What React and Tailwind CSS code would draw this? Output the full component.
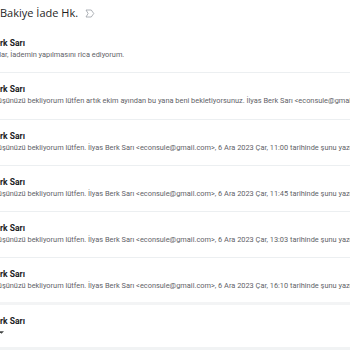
import { useState } from "react";

const SNIPPET_TAIL = "görüşünüzü bekliyorum lütfen. İlyas Berk Sarı <econsule@gmail.com>, 6 Ara 2023 Çar,";

const MESSAGES = [
  { id: 1, snippet: "Merhabalar, İademin yapılmasını rica ediyorum." },
  {
    id: 2,
    snippet:
      "Hâlâ görüşünüzü bekliyorum lütfen artık ekim ayından bu yana beni bekletiyorsunuz. İlyas Berk Sarı <econsule@gmail.com>, 6 Ara 2023 Çar,",
  },
  { id: 3, snippet: `Hâlâ ${SNIPPET_TAIL} 11:00 tarihinde şunu yazdı:` },
  { id: 4, snippet: `Hâlâ ${SNIPPET_TAIL} 11:45 tarihinde şunu yazdı:` },
  { id: 5, snippet: `Hâlâ ${SNIPPET_TAIL} 13:03 tarihinde şunu yazdı:` },
  { id: 6, snippet: `Hâlâ ${SNIPPET_TAIL} 16:10 tarihinde şunu yazdı:` },
];

function ImportantIcon() {
  return (
    <svg width="10" height="9" viewBox="0 0 20 18" fill="none">
      <path
        d="M2 2h10.5l5 7-5 7H2l4.2-7L2 2z"
        stroke="#9aa0a6"
        strokeWidth="1.6"
        strokeLinejoin="round"
      />
    </svg>
  );
}

function Sender() {
  return (
    <p className="text-[8.5px] leading-[11px] font-bold text-[#202124] whitespace-nowrap">İlyas Berk Sarı</p>
  );
}

function CollapsedMessage({ snippet, last }) {
  return (
    <div
      className={
        last
          ? "h-[46.3px] border-b-[3px] border-[#f3f4f5] pt-[11px]"
          : "h-[46.3px] border-b border-[#eceff1] pt-[11px]"
      }
    >
      <Sender />
      <p className="text-[7.4px] leading-[12px] text-[#5f6368] whitespace-nowrap">{snippet}</p>
    </div>
  );
}

export default function App() {
  const [open] = useState(true);

  return (
    <div className="w-[350px] h-[350px] overflow-hidden bg-white font-['Roboto','Liberation_Sans',sans-serif]">
      <div className="flex items-center gap-[7px] h-[27px]">
        <h2 className="text-[11px] text-[#1f1f1f] whitespace-nowrap font-['Open_Sans','Roboto',sans-serif]">
          Bakiye İade Hk.
        </h2>
        <ImportantIcon />
      </div>

      <div className="-ml-[30px]">
        {MESSAGES.map((m, i) => (
          <CollapsedMessage key={m.id} snippet={m.snippet} last={i === MESSAGES.length - 1} />
        ))}

        {open && (
          <div className="h-[46px] border-b-[4px] border-[#f1f3f4] pt-[11px]">
            <Sender />
            <div className="flex items-center h-[12px] text-[7.4px] text-[#5f6368] whitespace-nowrap">
              <span>bana</span>
              <span className="ml-[9px] w-[12px] flex justify-center">
                <svg width="5" height="3" viewBox="0 0 10 5">
                  <path d="M0 0l5 5 5-5z" fill="#444746" />
                </svg>
              </span>
            </div>
          </div>
        )}
      </div>
    </div>
  );
}
